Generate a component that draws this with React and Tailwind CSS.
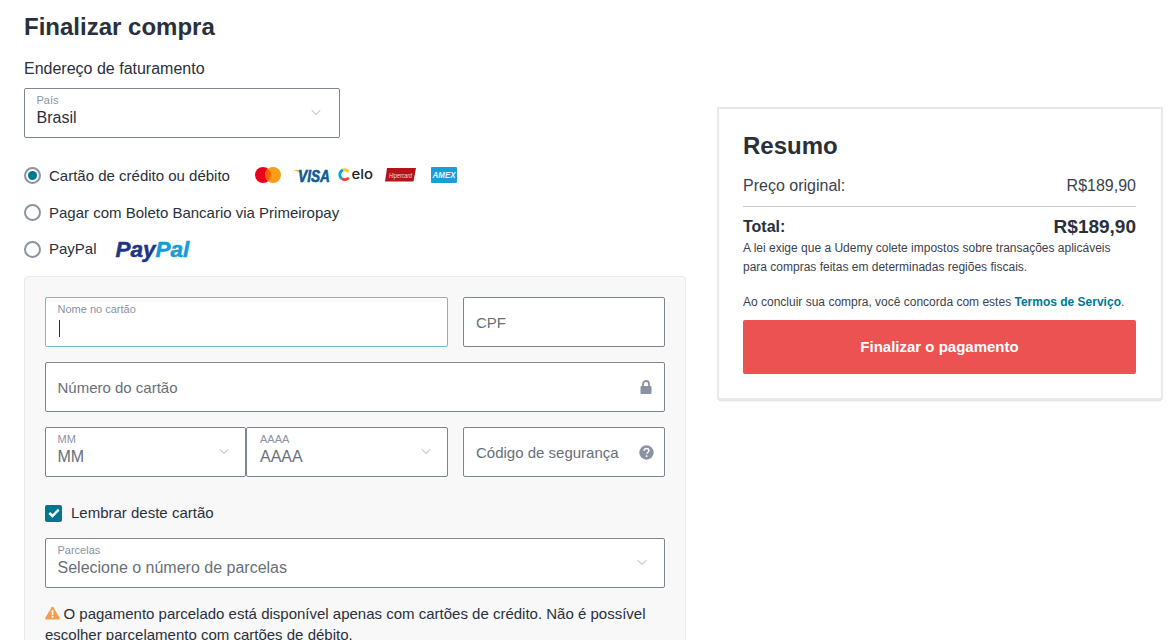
import React from "react";

const Chevron = () => (
  <svg width="10" height="7" viewBox="0 0 10 7" fill="none" className="shrink-0 mb-[1px]">
    <path d="M.7 1.200 L5 5.400 L9.300 1.200" stroke="#c8cbd0" strokeWidth="1.100" />
  </svg>
);

function SelectBox({ label, value, className = "", pr = "pr-[17px]", valueColor = "text-[#29303b]" }) {
  return (
    <div className={`h-[50px] bg-white border border-[#7d8494] rounded-[2px] pl-[11.5px] ${pr} flex items-center justify-between ${className}`}>
      <div className="flex flex-col min-w-0 self-start pt-[5px]">
        <span className="text-[11px] leading-[13px] text-[#8a92a3]">{label}</span>
        <span className={`text-base leading-[20px] pt-[1px] whitespace-nowrap ${valueColor}`}>{value}</span>
      </div>
      <Chevron />
    </div>
  );
}

function Radio({ checked }) {
  return (
    <span className="w-[17px] h-[17px] rounded-full border-2 border-[#8a92a3] bg-white flex items-center justify-center shrink-0">
      {checked && <span className="w-[9px] h-[9px] rounded-full bg-[#007791]" />}
    </span>
  );
}

const Mastercard = () => (
  <svg width="26" height="16" viewBox="0 0 26 16">
    <circle cx="8" cy="8" r="8" fill="#eb001b" />
    <circle cx="18" cy="8" r="8" fill="#f79e1b" />
    <path d="M13 1.760a8 8 0 0 1 0 12.480a8 8 0 0 1 0-12.480z" fill="#ff5f00" />
  </svg>
);

const Visa = () => (
  <svg width="37" height="16" viewBox="0 0 37 16" className="overflow-visible">
    <path d="M0 3h5.500c1 0 1.600.5 1.900 1.400L9.200 10C7.800 6.600 4.200 4.200 0 3.300z" fill="#f7a823" />
    <text x="4" y="15" fontFamily="Liberation Sans" fontWeight="700" fontStyle="italic" fontSize="17" fill="#0f5a9c" stroke="#0f5a9c" strokeWidth="0.6" textLength="32" lengthAdjust="spacingAndGlyphs">VISA</text>
  </svg>
);

const Elo = () => (
  <svg width="35" height="14" viewBox="0 0 35 14" className="overflow-visible">
    <path d="M10.500 3.800A5 5 0 0 0 5 2" fill="none" stroke="#ffcb05" strokeWidth="2.800" />
    <path d="M5 2A5 5 0 0 0 4 10.800" fill="none" stroke="#00a4e0" strokeWidth="2.800" />
    <path d="M4 10.800A5 5 0 0 0 10.700 9.600" fill="none" stroke="#ef4123" strokeWidth="2.800" />
    <text x="13.500" y="11.300" fontFamily="Inter" fontWeight="500" fontSize="13" fill="#1c1c1c" textLength="21.500" lengthAdjust="spacingAndGlyphs">elo</text>
  </svg>
);

const Hipercard = () => (
  <svg width="31" height="14" viewBox="0 0 31 14" className="overflow-visible">
    <path d="M2 0H31L28.500 13.500H0z" fill="#b3131b" />
    <text x="4" y="9.500" fontFamily="Liberation Sans" fontStyle="italic" fontSize="7" fill="#f2d9da" textLength="23" lengthAdjust="spacingAndGlyphs">Hipercard</text>
  </svg>
);

const Amex = () => (
  <svg width="26" height="16" viewBox="0 0 26 16" className="overflow-visible">
    <rect width="26" height="16" rx="1" fill="#1a9ddb" />
    <text x="1.500" y="11" fontFamily="Liberation Sans" fontWeight="700" fontStyle="italic" fontSize="8.500" fill="#e8f6fd" textLength="23" lengthAdjust="spacingAndGlyphs">AMEX</text>
  </svg>
);

const Lock = () => (
  <svg width="12" height="14" viewBox="0 0 12 14">
    <path d="M3 6V4a3 3 0 0 1 6 0v2" fill="none" stroke="#8a92a3" strokeWidth="1.800" />
    <rect x="0.500" y="6" width="11" height="8" rx="1" fill="#8a92a3" />
  </svg>
);

const Help = () => (
  <svg width="15" height="15" viewBox="0 0 15 15">
    <circle cx="7.500" cy="7.500" r="7.200" fill="#8a92a3" />
    <path d="M5.100 5.700c.1-1.400 1.100-2.100 2.400-2.100 1.400 0 2.400.8 2.400 2 0 1-.5 1.400-1.200 1.900-.6.400-.8.700-.8 1.300" fill="none" stroke="#fff" strokeWidth="1.500" />
    <rect x="6.800" y="10.300" width="1.600" height="1.700" fill="#fff" />
  </svg>
);

const Warn = () => (
  <svg width="15" height="14" viewBox="0 0 16 14" className="inline-block align-[-1px] mr-[4px] -ml-[0.5px]">
    <path d="M8 .4c.4 0 .7.2.9.5l6.800 11.500c.4.700-.1 1.500-.9 1.500H1.200c-.8 0-1.300-.8-.9-1.500L7.100.9C7.300.6 7.600.4 8 .4z" fill="#f59c49" />
    <rect x="7" y="4" width="2" height="5" fill="#fff" />
    <rect x="7" y="10" width="2" height="2" fill="#fff" />
  </svg>
);

export default function App() {
  return (
    <div className="h-[640px] overflow-hidden bg-white font-['Liberation_Sans',Arial,sans-serif] text-[#29303b] flex items-start pl-6 pr-[10px]">
      <main className="w-[662px] shrink-0">
        <h1 className="text-2xl leading-[29px] font-bold mt-[12px]">Finalizar compra</h1>
        <h2 className="text-base leading-5 mt-[18px]">Endereço de faturamento</h2>
        <SelectBox label="País" value="Brasil" className="w-[316px] mt-[9px]" pr="pr-[18px]" />

        <div className="mt-[28px] h-[18px] flex items-center gap-2 text-[15px]">
          <Radio checked />
          <span className="pt-[2px]">Cartão de crédito ou débito</span>
          <span className="flex items-center ml-[17px]">
            <Mastercard />
            <span className="ml-[13px]"><Visa /></span>
            <span className="ml-[7px]"><Elo /></span>
            <span className="ml-[12px]"><Hipercard /></span>
            <span className="ml-[15px]"><Amex /></span>
          </span>
        </div>
        <div className="mt-[19px] h-[18px] flex items-center gap-2 text-[15px]">
          <Radio />
          <span className="pt-[2px]">Pagar com Boleto Bancario via Primeiropay</span>
        </div>
        <div className="mt-[19px] h-[18px] flex items-center gap-2 text-[15px]">
          <Radio />
          <span>PayPal</span>
          <span className="ml-[11px] text-[22.5px] leading-[18px] font-bold italic pt-[1px] [-webkit-text-stroke:0.5px]">
            <span className="text-[#1d3586]">Pay</span><span className="text-[#179bd7]">Pal</span>
          </span>
        </div>

        <section className="mt-[18px] bg-[#f8f8f8] border border-[#e8e9eb] rounded-[4px] p-5">
          <div className="flex gap-[15px]">
            <div className="w-[403px] h-[50px] bg-white border border-[#69c1d0] rounded-[2px] pl-[11.5px] pr-3 flex flex-col">
              <span className="text-[11px] leading-[13px] text-[#8a92a3] mt-[5px]">Nome no cartão</span>
              <span className="w-px h-[17px] bg-[#29303b] mt-[4px] ml-[1px]" />
            </div>
            <div className="w-[202px] h-[50px] bg-white border border-[#7d8494] rounded-[2px] px-3 pt-[2px] flex items-center text-[15px] text-[#686f7a]">CPF</div>
          </div>
          <div className="mt-[15px] w-[620px] h-[50px] bg-white border border-[#7d8494] rounded-[2px] pl-[11.5px] pr-3 flex items-center justify-between text-[15px] text-[#686f7a]">
            <span className="pt-[2px]">Número do cartão</span>
            <Lock />
          </div>
          <div className="mt-[15px] flex">
            <SelectBox label="MM" value="MM" className="w-[201px]" pr="pr-[16px]" valueColor="text-[#686f7a]" />
            <SelectBox label="AAAA" value="AAAA" className="w-[202px] pl-[13px]" pr="pr-[16px]" valueColor="text-[#686f7a]" />
            <div className="w-[202px] h-[50px] ml-[15px] bg-white border border-[#7d8494] rounded-[2px] pl-3 pr-[10px] flex items-center justify-between text-[15px] text-[#686f7a]">
              <span className="pt-[2px]">Código de segurança</span>
              <Help />
            </div>
          </div>
          <div className="mt-[27px] flex items-center gap-[9px] text-[15px] h-[18px]">
            <span className="w-[17px] h-[17px] bg-[#007791] rounded-[2px] flex items-center justify-center">
              <svg width="12" height="10" viewBox="0 0 12 10"><path d="M1.300 5 L4.500 8 L10.700 1.700" fill="none" stroke="#fff" strokeWidth="2.400" /></svg>
            </span>
            <span>Lembrar deste cartão</span>
          </div>
          <SelectBox label="Parcelas" value="Selecione o número de parcelas" className="w-[620px] mt-[16px]" valueColor="text-[#686f7a]" />
          <p className="mt-[15px] text-[15px] leading-[21px] w-[620px]">
            <Warn />O pagamento parcelado está disponível apenas com cartões de crédito. Não é possível escolher parcelamento com cartões de débito.
          </p>
        </section>
      </main>

      <aside className="ml-[33px] mt-[109px] w-[442px] h-[289px] shrink-0 bg-white shadow-[0_0_0_2px_#e8e9eb,0_3px_1px_0_rgba(20,23,28,0.12)] pt-[22px] pl-[24px] pr-[25px]">
        <h2 className="text-2xl leading-[29px] font-bold">Resumo</h2>
        <div className="mt-[16px] flex justify-between text-base leading-5 pb-[10px] border-b border-[#c8cbd0] text-[#3b424e]">
          <span>Preço original:</span>
          <span>R$189,90</span>
        </div>
        <div className="mt-[9px] flex justify-between items-center font-bold h-[22px]">
          <span className="text-base">Total:</span>
          <span className="text-[19px]">R$189,90</span>
        </div>
        <p className="text-xs leading-[19px] mt-[1px] text-[#3b424e]">
          A lei exige que a Udemy colete impostos sobre transações aplicáveis para compras feitas em determinadas regiões fiscais.
        </p>
        <p className="text-xs leading-[19px] mt-[16px] text-[#3b424e]">
          Ao concluir sua compra, você concorda com estes <span className="font-bold text-[#007791]">Termos de Serviço</span>.
        </p>
        <button className="mt-[8px] w-full h-[54px] bg-[#ec5252] rounded-[2px] text-white font-bold text-[15px]">Finalizar o pagamento</button>
      </aside>
    </div>
  );
}
